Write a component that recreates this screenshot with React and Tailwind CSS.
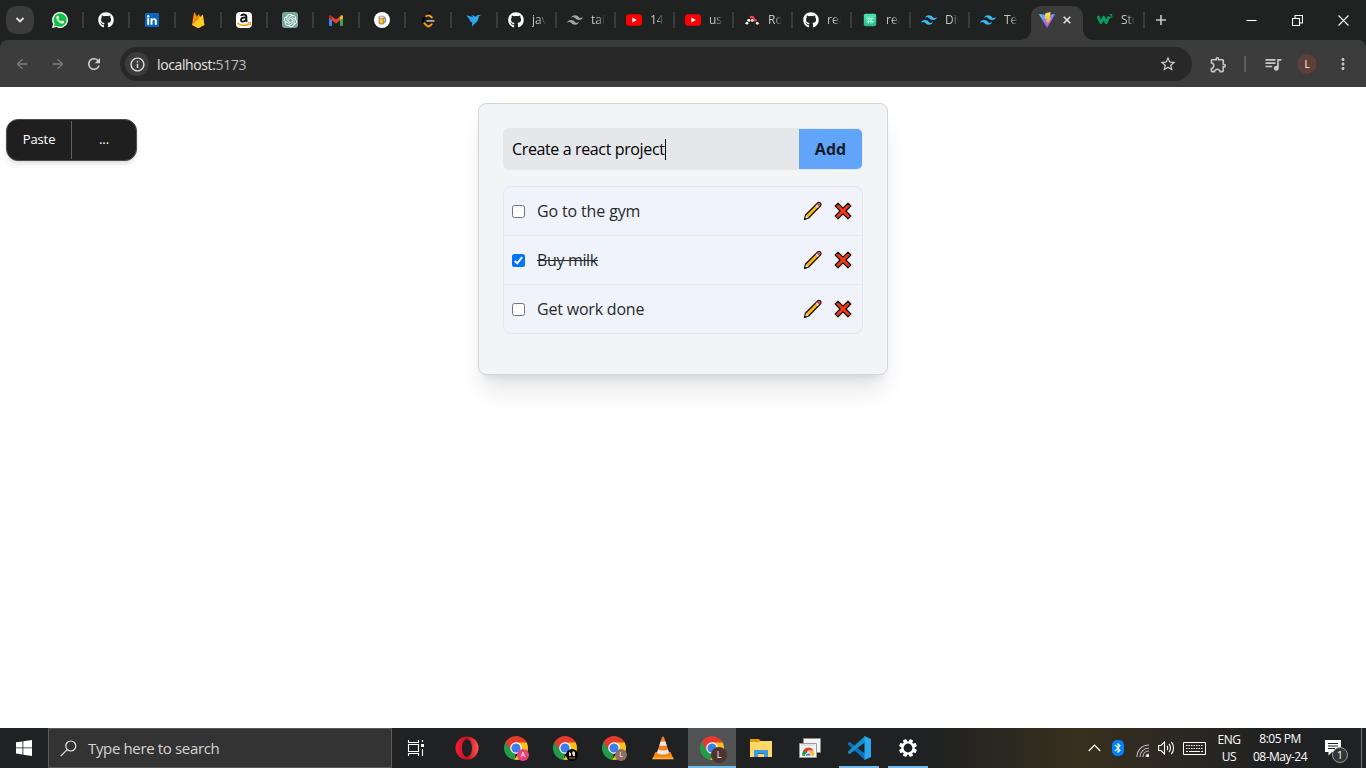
import React from "react";
import { FaGithub, FaWhatsapp } from "react-icons/fa";
import { SiLeetcode, SiTailwindcss, SiOpenai } from "react-icons/si";
import {
  MdArrowBack, MdArrowForward, MdRefresh, MdInfoOutline, MdStarBorder,
  MdOutlineExtension, MdQueueMusic, MdMoreVert, MdBluetooth,
} from "react-icons/md";

const WhatsApp = () => (
  <svg width="16" height="16" viewBox="0 0 16 16">
    <path d="M8 0a8 8 0 1 1-3.7 15.1L0 16l1.1-4A8 8 0 0 1 8 0z" fill="#fff" />
    <path d="M8 1.3a6.7 6.7 0 1 1-3.3 12.5l-2.9.7.8-2.8A6.7 6.7 0 0 1 8 1.3z" fill="#12c143" />
    <path d="M5.1 4.1c.5-.4 1-.3 1.2.1l.7 1.5c.1.4-.7 1-.5 1.3.5 1 1.4 1.9 2.5 2.4.4.2.9-.9 1.3-.7l1.5.8c.5.3 0 1.5-.7 1.9-1.1.6-2.9-.1-4.3-1.4C5.300 8.600 4.300 7 4.300 5.700c0-.7.4-1.300.8-1.600z" fill="#fff" />
  </svg>
);
const LinkedIn = () => (
  <svg width="14" height="14" viewBox="0 0 14 14">
    <rect width="14" height="14" rx="1" fill="#0a66c2" />
    <circle cx="3.2" cy="3.200" r="1.200" fill="#fff" />
    <path d="M2.200 5.300h2v6.500h-2zM5.500 5.300h1.900v1c.9-1.600 4.400-1.600 4.400 1.700v3.800h-2V8.400c0-2-2.300-1.900-2.300 0v3.400h-2z" fill="#fff" />
  </svg>
);
const Firebase = () => (
  <svg width="14" height="16" viewBox="0 0 14 16">
    <path d="M1 13 3 .8c.1-.5.600-.5.800-.1L6 4.700 7.200 2.500c.2-.4.600-.4.800 0L13 13z" fill="#ff9100" />
    <path d="M1 13 6 4.800l2.200 4z" fill="#f57c00" />
    <path d="M1 13 11.200 3c.3-.3.700-.1.800.2L13.500 13l-5.600 3c-.4.200-.8.200-1.200 0z" fill="#ffca28" />
  </svg>
);
const Amazon = () => (
  <span className="flex h-4 w-4 flex-col items-center rounded-sm bg-white">
    <svg width="16" height="16" viewBox="0 0 16 16">
      <path d="M5.300 4.100c.2-1.800 5-2.400 5 .4v4.100l.8 1" fill="none" stroke="#111" strokeWidth="2" />
      <path d="M10 5.400c-2.900 0-5 .4-5 2.500 0 2.300 3.700 2.300 5-.3" fill="none" stroke="#111" strokeWidth="1.900" />
      <path d="M1.500 11c3.800 3.300 8.800 3.300 12 .7" fill="none" stroke="#ff9900" strokeWidth="1.500" />
      <path d="M12 10.600h2.700c.1 1-.3 2-1 2.800" fill="none" stroke="#ff9900" strokeWidth="1" />
    </svg>
  </span>
);
const ChatGPT = () => (
  <span className="flex h-4 w-4 items-center justify-center rounded-[3px] bg-[#75a99c] text-white"><SiOpenai size={13} /></span>
);
const Gmail = () => (
  <svg width="14" height="11" viewBox="0 0 14 11">
    <path d="M0 2h3v9H1a1 1 0 0 1-1-1z" fill="#4285f4" />
    <path d="M11 2h3v8a1 1 0 0 1-1 1h-2z" fill="#34a853" />
    <path d="M11 1.600 12 .6c.8-.7 2-.2 2 1V3l-3 2.300z" fill="#fbbc04" />
    <path d="M3 1.500 7 4.600l4-3.100v3.800L7 8.400 3 5.300z" fill="#ea4335" />
    <path d="M0 3V1.600C0 .4 1.200-.1 2 .6l1 .9v3.800z" fill="#c5221f" />
  </svg>
);
const Beer = () => (
  <svg width="16" height="16" viewBox="0 0 16 16">
    <circle cx="8" cy="8" r="8" fill="#fff" />
    <path d="M9.500 6h2v4h-2" fill="none" stroke="#777" strokeWidth="1" />
    <rect x="5" y="5" width="5" height="7" rx=".6" fill="#f2b01e" stroke="#555" strokeWidth=".5" />
    <path d="M7 6v5" stroke="#ffdf66" />
    <path d="M4.900 4.200h5.300v1.900H5z" fill="#eee" stroke="#777" strokeWidth=".6" />
  </svg>
);
const LeetCode = () => (
  <svg width="16" height="16" viewBox="0 0 16 16">
    <path d="M9.800.8 3.400 7.200c-.9.900-.9 2 0 2.900l1 1" fill="none" stroke="#050505" strokeWidth="2" strokeLinecap="round" />
    <path d="M6.300 4.300c1.400-1.200 3-1.100 4.200 0l1.300 1.200M4.300 11.200l2.200 2.200c1.200 1.200 2.800 1.200 4 0l1.200-1.200" fill="none" stroke="#ffa116" strokeWidth="1.900" strokeLinecap="round" />
    <path d="M7.300 8.900h6.400" stroke="#b3b3b3" strokeWidth="1.800" strokeLinecap="round" />
  </svg>
);
const Bird = () => (
  <svg width="16" height="16" viewBox="0 0 16 16">
    <path d="M.5 3.300 7.300 5.200 5.500 2.800l4.500 2C10.700 3 12 2.800 13 3l3-.2-3 1.300c-.5 4-2 6.400-5.300 8.400L6 14.800l.2-4C5 9.800 3.800 9 3 7.200l2.200.5C3 6.800 1.500 5.400.5 3.300z" fill="#29a9f4" />
  </svg>
);
const YouTube = () => (
  <svg width="16" height="16" viewBox="0 0 16 16">
    <rect y="2.300" width="16" height="11.400" rx="3" fill="#f00" />
    <path d="M6.300 5.500 10.800 8l-4.500 2.500z" fill="#fff" />
  </svg>
);
const Router = () => (
  <svg width="16" height="16" viewBox="0 0 16 16">
    <path d="M7 5.200c2-.5 2.500.3 2.500 1.600 0 1.500.6 1.200 2.200 1.600" fill="none" stroke="#f44250" strokeWidth="2.400" strokeLinecap="round" />
    <g fill="#fff"><circle cx="4.900" cy="8.300" r="1.500" /><circle cx="2.900" cy="11.200" r="1.400" /><circle cx="8.300" cy="8.400" r="1.300" /><circle cx="13.300" cy="11.300" r="1.400" /></g>
  </svg>
);
const Green = () => (
  <svg width="16" height="16" viewBox="0 0 16 16">
    <defs><linearGradient id="mint" x2="0" y2="1"><stop stopColor="#46e5b0" /><stop offset="1" stopColor="#2cb98b" /></linearGradient></defs>
    <rect x="1.800" y="1.800" width="12.400" height="12.400" rx="1.800" fill="url(#mint)" />
    <path d="m7.200 4.300-1 7.400m4-7.400-1.200 7.400M4.300 7l7.400-.6M4.200 10l7.400-.7M5 4.700l6 6.500" stroke="#a9fbe0" strokeWidth=".9" />
  </svg>
);
const Vite = () => (
  <svg width="16" height="16" viewBox="0 0 16 16">
    <defs>
      <linearGradient id="va" x1="0" y1="0" x2=".6" y2="1"><stop stopColor="#41d1ff" /><stop offset="1" stopColor="#bd34fe" /></linearGradient>
      <linearGradient id="vb" x2="0" y2="1"><stop stopColor="#ffdf5a" /><stop offset="1" stopColor="#ffa800" /></linearGradient>
    </defs>
    <path d="M15.900 2.500 8.500 15.500c-.2.300-.6.300-.8 0L.1 2.500c-.2-.3.100-.7.500-.6L8 3.200l7.400-1.300c.4-.1.700.3.500.6z" fill="url(#va)" />
    <path d="M11.600.1 6.300 1.200 5.700 7l2-.4-.8 3.700 1.800-.5-.9 4.100 4.600-8-1.800.4z" fill="url(#vb)" />
  </svg>
);
const W3 = () => (
  <svg width="16" height="16" viewBox="0 0 16 16">
    <path d="M.8 4.200 4 10.800l2.600-5.600 2.700 5.600 2.800-6.400" fill="none" stroke="#04a064" strokeWidth="2.700" strokeLinejoin="round" />
    <path d="M12.800 2.600h2.300L13.800 4c2.200 0 1.600 2.400-.9 1.600" fill="none" stroke="#04a064" strokeWidth="1" />
  </svg>
);

const compactTabs = [WhatsApp, () => <FaGithub size={16} color="#fff" />, LinkedIn, Firebase, Amazon, ChatGPT, Gmail, Beer, LeetCode, Bird];
const wideTabs = [
  [() => <FaGithub size={16} color="#fff" />, "java"],
  [() => <SiTailwindcss size={16} color="#a4a4a4" />, "tail"],
  [YouTube, "14"], [YouTube, "us"], [Router, "Ro"],
  [() => <FaGithub size={16} color="#fff" />, "rea"],
  [Green, "rea"],
  [() => <SiTailwindcss size={16} color="#38bdf8" />, "Div"],
  [() => <SiTailwindcss size={16} color="#38bdf8" />, "Tex"],
];

const Separator = () => <span className="h-4 w-[2px] shrink-0 bg-[#3c3e3d]" />;
const TabLabel = ({ children }) => (
  <span className="ml-2 h-4 w-[14px] shrink-0 overflow-hidden whitespace-nowrap text-[12px] leading-4 text-[#c6c8c7] [mask-image:linear-gradient(to_right,black_45%,transparent)]">{children}</span>
);

function TabStrip() {
  return (
    <div className="flex h-10 items-center">
      <button className="ml-1.5 flex h-7 w-7 shrink-0 items-center justify-center rounded-[10px] bg-[#3c3c3c]">
        <svg width="10" height="6" viewBox="0 0 10 6"><path d="m1.500 1 3.500 3.500L8.500 1" fill="none" stroke="#e3e3e3" strokeWidth="1.800" /></svg>
      </button>
      <div className="ml-1 flex">
        {compactTabs.map((Icon, i) => (
          <div key={i} className="flex h-4 w-[46px] items-center">
            <span className="flex flex-1 items-center justify-center"><Icon /></span>
            <Separator />
          </div>
        ))}
      </div>
      {wideTabs.map(([Icon, label], i) => (
        <div key={i} className="flex h-4 w-[59px] shrink-0 items-center pl-2.5">
          <Icon />
          <TabLabel>{label}</TabLabel>
          <span className="flex-1" />
          {i < 8 && <Separator />}
        </div>
      ))}
      <div className="-ml-2 flex h-10 w-[72px] shrink-0 items-end">
        <span className="h-2.5 w-2.5 bg-[radial-gradient(circle_at_0_0,transparent_9.500px,#3c3c3c_10px)]" />
        <div className="flex h-[34px] w-[52px] items-center rounded-t-[10px] bg-[#3c3c3c] pb-1.5 pl-2">
          <Vite />
          <svg className="ml-2" width="8" height="8" viewBox="0 0 8 8"><path d="m.7.7 6.600 6.600m0-6.600L.7 7.300" stroke="#e3e3e3" strokeWidth="1.600" /></svg>
        </div>
        <span className="h-2.5 w-2.5 bg-[radial-gradient(circle_at_100%_0,transparent_9.500px,#3c3c3c_10px)]" />
      </div>
      <div className="ml-1 flex items-center">
        <W3 />
        <TabLabel>Sto</TabLabel>
        <span className="w-2" />
        <Separator />
      </div>
      <svg className="ml-[10px]" width="12" height="12" viewBox="0 0 12 12"><path d="M6 1v10M1 6h10" stroke="#c9c9c9" strokeWidth="1.600" /></svg>
      <div className="ml-auto flex">
        {["M0.500 5.500h10", "M.5 3.500h7v7h-7zM3 3V.500h7.500V8H8", "m.5.5 10 10m0-10-10 10"].map((d, i) => (
          <span key={i} className="flex h-10 w-[46px] items-center justify-center">
            <svg width="11" height="11" viewBox="0 0 11 11"><path d={d} fill="none" stroke="#fff" strokeWidth="1.100" /></svg>
          </span>
        ))}
      </div>
    </div>
  );
}

function Toolbar() {
  return (
    <div className="flex h-[47px] items-center rounded-t-lg bg-[#3c3c3c] pt-px">
      <MdArrowBack className="ml-[14px]" size={16} color="#7d7d7d" />
      <MdArrowForward className="ml-5" size={16} color="#7d7d7d" />
      <MdRefresh className="ml-[19px]" size={18} color="#d0d0d0" />
      <div className="ml-[17px] flex h-[34px] w-[1072px] items-center rounded-full bg-[#282828] pl-[5px] pr-[15px]">
        <span className="flex h-6 w-6 items-center justify-center rounded-full bg-[#3c3c3c]"><MdInfoOutline size={17} color="#e0e0e0" /></span>
        <span className="ml-2 text-[14px] tracking-[-0.38px] text-[#e6e6e6]">localhost:<span className="text-[#bababa]">5173</span></span>
        <MdStarBorder className="ml-auto" size={18} color="#d0d0d0" />
      </div>
      <MdOutlineExtension className="ml-[17px]" size={19} color="#c7c7c7" />
      <span className="ml-[16px] h-4 w-[2px] bg-[#5d5d5d]" />
      <MdQueueMusic className="ml-[17px]" size={20} color="#c7c7c7" />
      <span className="ml-[14px] flex h-5 w-5 items-center justify-center rounded-full bg-[#5d4037] text-[10px] text-white">L</span>
      <MdMoreVert className="ml-[17px]" size={18} color="#c7c7c7" />
    </div>
  );
}

const Pencil = () => (
  <svg width="20" height="20" viewBox="0 0 20 20">
    <path d="M1.500 18.500 2.600 14 14.400 2.200c1-1 1.900-1 2.900-.1s.9 2 0 2.900L5.900 16.800z" fill="#ffb900" stroke="#111" strokeWidth="1.300" strokeLinejoin="round" />
    <path d="M13.600 3.600 15 2.300c.8-.6 1.400-.5 2 .1s.6 1.300 0 2l-1.300 1.300z" fill="#e74856" />
    <path d="m12.600 4.500 1.200-1.100 2.200 2.300-1.200 1.200zM3 14.300l2.300 2.300-2.500.8-.5-.4z" fill="#ddd" />
    <path d="m1.500 18.500.5-2 1.600 1.500z" fill="#111" />
  </svg>
);
const Cross = () => (
  <svg width="18" height="18" viewBox="0 0 18 18">
    <path d="M4 1.200 9 6.100l5-4.900 2.800 2.800-4.900 5 4.900 5-2.800 2.800-5-4.900-5 4.900L1.200 14l4.900-5-4.900-5z" fill="#f03a17" stroke="#111" strokeWidth="1.200" strokeLinejoin="round" />
  </svg>
);
const Check = ({ checked }) => checked ? (
  <span className="flex h-[13px] w-[13px] items-center justify-center rounded-[2.500px] bg-[#0075ff]">
    <svg width="11" height="11" viewBox="0 0 11 11"><path d="m1.700 5.900 2.500 2.400 5-6.200" fill="none" stroke="#fff" strokeWidth="2" /></svg>
  </span>
) : <span className="h-[13px] w-[13px] rounded-[2.500px] border border-[#767676] bg-white" />;

const todos = [
  { text: "Go to the gym", cls: "tracking-[-0.14px]" },
  { text: "Buy milk", done: true, cls: "tracking-[-0.35px] line-through" },
  { text: "Get work done", cls: "tracking-[-0.2px]" },
];

function Page() {
  return (
    <main className="relative flex h-[641px] justify-center bg-white pt-4">
      <div className="h-[272px] w-[410px] rounded-lg border border-gray-300 bg-gray-100 p-6 shadow-xl">
        <div className="flex h-[42px] w-[360px] items-center rounded-md bg-[#e5e7eb]">
          <div className="flex h-[42px] w-[296px] items-center pl-[9px] text-[16px] text-black">
            <span className="whitespace-nowrap tracking-[-0.37px]">Create a react project</span>
            <span className="h-[21px] w-px bg-black" />
          </div>
          <button className="h-10 w-[63px] rounded-r-[5px] bg-[#60a5fa] text-[16px] font-bold text-[#151b26]">Add</button>
        </div>
        <ul className="mt-4 w-[360px] divide-y divide-gray-200 rounded-lg border border-gray-200 bg-[#f0f4fa]">
          {todos.map((t) => (
            <li key={t.text} className="flex h-[49px] items-center pl-2 pr-[10px] last:h-12">
              <Check checked={t.done} />
              <span className={"ml-3 text-[16px] text-[#27292c] " + t.cls}>{t.text}</span>
              <span className="ml-auto flex items-center gap-[11px]"><Pencil /><Cross /></span>
            </li>
          ))}
        </ul>
      </div>
      <div className="absolute left-1.5 top-8 flex h-[42px] w-[131px] items-center rounded-[12px] border border-[#4a4d4f] bg-[#1f1f1f] text-[13px] text-white shadow-md">
        <span className="w-[64px] text-center tracking-[-0.1px]">Paste</span>
        <span className="h-[38px] w-px bg-[#606060]" />
        <span className="flex-1 text-center">...</span>
      </div>
    </main>
  );
}

const Chrome = ({ id }) => (
  <svg width="24" height="24" viewBox="0 0 24 24">
    <clipPath id={id}><circle cx="12" cy="12" r="12" /></clipPath>
    <g clipPath={"url(#" + id + ")"}>
      <path d="M0 0h24v7H12L6.800 15 0 4z" fill="#e33b2e" />
      <path d="M1 5.300 7.200 15 12 17l-1.500 7H0V5z" fill="#249b48" />
      <path d="M12 6.500h12V24H10l6.500-9.500z" fill="#fbc116" />
    </g>
    <circle cx="12" cy="12" r="5.800" fill="#fff" />
    <circle cx="12" cy="12" r="4.600" fill="#3b7ded" />
  </svg>
);
const ChromeProfile = ({ id, badge, cls }) => (
  <span className="relative block h-6 w-6">
    <Chrome id={id} />
    <span className={"absolute flex items-center justify-center rounded-full " + cls}>{badge}</span>
  </span>
);
const Opera = () => (
  <svg width="24" height="24" viewBox="0 0 24 24">
    <defs><linearGradient id="op" x2="1"><stop stopColor="#f52035" /><stop offset=".5" stopColor="#c70d20" /><stop offset="1" stopColor="#ff5a57" /></linearGradient></defs>
    <path fillRule="evenodd" d="M12 .5a11.500 11.500 0 1 0 0 23 11.500 11.500 0 0 0 0-23zm0 2.700c3 0 5 4 5 8.800s-2 8.800-5 8.800S7 17 7 12s2-8.800 5-8.800z" fill="url(#op)" />
  </svg>
);
const Vlc = () => (
  <svg width="22" height="24" viewBox="0 0 22 24">
    <path d="M3.500 16h15l2.800 6.500H.7z" fill="#f28b0c" />
    <path d="M.5 21.500h21v1.800H.5z" fill="#ffaf38" />
    <path d="M10 1c.5-.8 1.500-.8 2 0l5.500 17c-2 2.500-11 2.500-13 0z" fill="#f57f17" />
    <path d="M8.600 5.500h4.800l1.500 4.300H7.200zM6 13.500c3 1.200 7 1.200 10 0l1 3.500c-3 2-9 2-12 0z" fill="#e8e8e8" />
  </svg>
);
const Explorer = () => (
  <svg width="22" height="19" viewBox="0 0 22 19">
    <path d="M0 0h9l1.500 2H22v3H0z" fill="#dca000" />
    <path d="M0 3h9l1-1h12v16H0z" fill="#ffd868" />
    <path d="M4 11h14v7h-4v-3.500H8V18H4z" fill="#3b9be2" />
    <path d="M8 14h6v1H8z" fill="#1e6bab" />
  </svg>
);
const Gallery = () => (
  <svg width="22" height="20" viewBox="0 0 22 20">
    <path d="M4.500.5h17v14h-17z" fill="#f4f4f4" stroke="#8d8d8d" />
    <path d="M.5 5.500h17v14H.5z" fill="#f8f8f8" stroke="#999" />
    <path d="M2 7h14" stroke="#ccc" />
    <path d="M3.500 18a6 6 0 0 1 3-7L9 16l-1 2z" fill="#279b4a" />
    <path d="M4.500 12.500c2-4 8-4 10 0H9L7.500 15z" fill="#e33b2e" />
    <path d="M10 13h4.800c.8 2 .4 4 0 5H11z" fill="#fbc116" />
    <path d="M6.300 18a3 3 0 0 1 6 0z" fill="#3b7ded" stroke="#fff" strokeWidth=".8" />
  </svg>
);
const Code = () => (
  <svg width="24" height="24" viewBox="0 0 24 24">
    <path d="m1 7.300 1.500-1.500 15.500 12V24L1.200 8.700z" fill="#0a73b9" />
    <path d="m1 16.700 1.500 1.500 15.500-12V0L1.200 15.300z" fill="#168dd2" />
    <path d="M17.500 0 24 3v18l-6.500 3z" fill="#2ba6ef" />
  </svg>
);
const Gear = () => (
  <svg width="20" height="20" viewBox="0 0 20 20">
    <g fill="#fff">
      {[0, 45, 90, 135, 180, 225, 270, 315].map((a) => <rect key={a} x="8.100" y="1" width="3.800" height="4" rx=".8" transform={"rotate(" + (a + 22.5) + " 10 10)"} />)}
    </g>
    <circle cx="10" cy="10" r="5.600" fill="none" stroke="#fff" strokeWidth="2.400" />
  </svg>
);
const TaskView = () => (
  <svg width="18" height="16" viewBox="0 0 18 16">
    <path d="M1.500 0v2.500h10V0M1.500 16v-2.500h10V16M1.500 4.500h10v7h-10zM15.500 0v2M15.500 9v7" fill="none" stroke="#fff" strokeWidth="1.100" />
    <path d="M14 4h3v3h-3z" fill="#fff" />
  </svg>
);

const apps = [
  { icon: <Opera /> },
  { icon: <ChromeProfile id="c1" badge="A" cls="-bottom-px -right-px h-3 w-3 bg-[#ec407a] text-[7px] text-white" /> },
  { icon: <ChromeProfile id="c2" cls="-bottom-px -right-px h-3 w-3 bg-black" badge={<svg width="12" height="12" viewBox="0 0 12 12"><path d="m3 3 2 1v3H3zM6 4l1-2 2 1v4H7z" fill="#e7d9cb" /><path d="M3 9h6" stroke="#b88a27" /></svg>} /> },
  { icon: <ChromeProfile id="c3" badge="L" cls="-bottom-px -right-px h-3 w-3 bg-[#8d6e63] text-[7px] text-white" /> },
  { icon: <Vlc /> },
  { icon: <ChromeProfile id="c4" badge="L" cls="-bottom-[3px] -right-[3px] h-4 w-4 bg-[#4e342e] text-[9px] text-white" />, active: true },
  { icon: <Explorer /> },
  { icon: <Gallery /> },
  { icon: <Code />, open: true },
  { icon: <Gear />, open: true },
];

function Taskbar() {
  return (
    <footer className="flex h-10 items-center bg-[linear-gradient(to_right,#202122_0px,#202122_930px,#37301f_1080px,#2b2822_1180px,#202122_1270px)] text-white">
      <span className="flex w-12 justify-center">
        <svg width="16" height="16" viewBox="0 0 16 16"><path d="M0 2.300 6.500 1.400v6.100H0zM7.300 1.300 16 0v7.500H7.300zM0 8.300h6.500v6.200L0 13.600zM7.300 8.300H16V16l-8.700-1.200z" fill="#fff" /></svg>
      </span>
      <div className="flex h-10 w-[344px] items-center border border-[#5b5b5b] bg-[#333] pl-[11px]">
        <svg width="17" height="17" viewBox="0 0 17 17"><circle cx="10.800" cy="6" r="5" fill="none" stroke="#e6e6e6" strokeWidth="1.200" /><path d="M7.200 9.700.7 16.200" stroke="#e6e6e6" strokeWidth="1.200" /></svg>
        <span className="ml-[11px] text-[15px] tracking-[-0.35px] text-[#d6d6d6]">Type here to search</span>
      </div>
      <span className="flex w-12 justify-center"><TaskView /></span>
      <div className="ml-[3px] flex gap-px">
        {apps.map((a, i) => (
          <div key={i} className={"flex h-10 w-12 flex-col items-center " + (a.active ? "bg-[#505254]" : "")}>
            <span className="flex h-[38px] items-center justify-center pt-0.5">{a.icon}</span>
            <span className={"h-0.5 " + (a.active ? "w-12 bg-[#76b9ed]" : a.open ? "w-10 bg-[#76b9ed]" : "w-10")} />
          </div>
        ))}
      </div>
      <div className="ml-auto flex h-10 items-center">
        <svg width="13" height="8" viewBox="0 0 13 8"><path d="m.7 7 5.800-6 5.800 6" fill="none" stroke="#fff" strokeWidth="1.200" /></svg>
        <span className="ml-[11px] flex h-4 w-3 items-center justify-center rounded-[5px] bg-[#0082fc]"><MdBluetooth size={12} /></span>
        <svg className="ml-[12px] mt-1" width="15" height="15" viewBox="0 0 15 15"><g fill="none" stroke="#c5c5c5" strokeWidth="1.100"><path d="M1 14C1 7 6 2 13 2M4 14c0-5 4-9 9-9M7 14c0-3.500 2.500-6 6-6M10 14c0-2 1-3 3-3" /></g><circle cx="11.800" cy="12.800" r="1.400" fill="#fff" /></svg>
        <svg className="ml-[7px]" width="17" height="14" viewBox="0 0 17 14"><path d="M.6 4.500H3L6.500 1v12L3 9.500H.6zM9 5c1 1 1 3 0 4M11 3c2 2 2 6 0 8M13.300 1c3 3 3 9 0 12" fill="none" stroke="#fff" strokeWidth="1.100" /></svg>
        <svg className="ml-[8px]" width="23" height="13" viewBox="0 0 23 13"><path d="M.5.5h22v12H.5z" fill="none" stroke="#fff" /><path d="M3 3.500h17M3 6.500h17" stroke="#fff" strokeDasharray="1.500 1" /><path d="M3 9.500h2m1 0h11m1 0h2" stroke="#fff" /></svg>
        <div className="ml-[8px] w-[30px] whitespace-nowrap text-center text-[12px] leading-[17px] tracking-[-0.5px]"><div>ENG</div><div>US</div></div>
        <div className="ml-[6px] w-[60px] whitespace-nowrap text-center text-[12px] leading-[18px] tracking-[-0.5px]"><div>8:05 PM</div><div>08-May-24</div></div>
        <span className="relative ml-[15px] block h-4 w-4">
          <svg width="16" height="16" viewBox="0 0 16 16"><path d="M0 0h16v12H7l-3.500 3.500V12H0z" fill="#fff" /><path d="M3 3.500h10M3 6h10M3 8.500h7" stroke="#202122" /></svg>
          <span className="absolute left-[7px] top-[7px] flex h-4 w-4 items-center justify-center rounded-full border border-[#9a9a9a] bg-[#353535] text-[11px]">1</span>
        </span>
        <span className="ml-5 mr-1 h-10 w-px bg-[#777]" />
      </div>
    </footer>
  );
}

export default function App() {
  return (
    <div className="flex h-[768px] w-[1366px] flex-col overflow-hidden bg-[#202221] font-['Open_Sans','Noto_Sans',sans-serif]">
      <TabStrip />
      <Toolbar />
      <Page />
      <Taskbar />
    </div>
  );
}
